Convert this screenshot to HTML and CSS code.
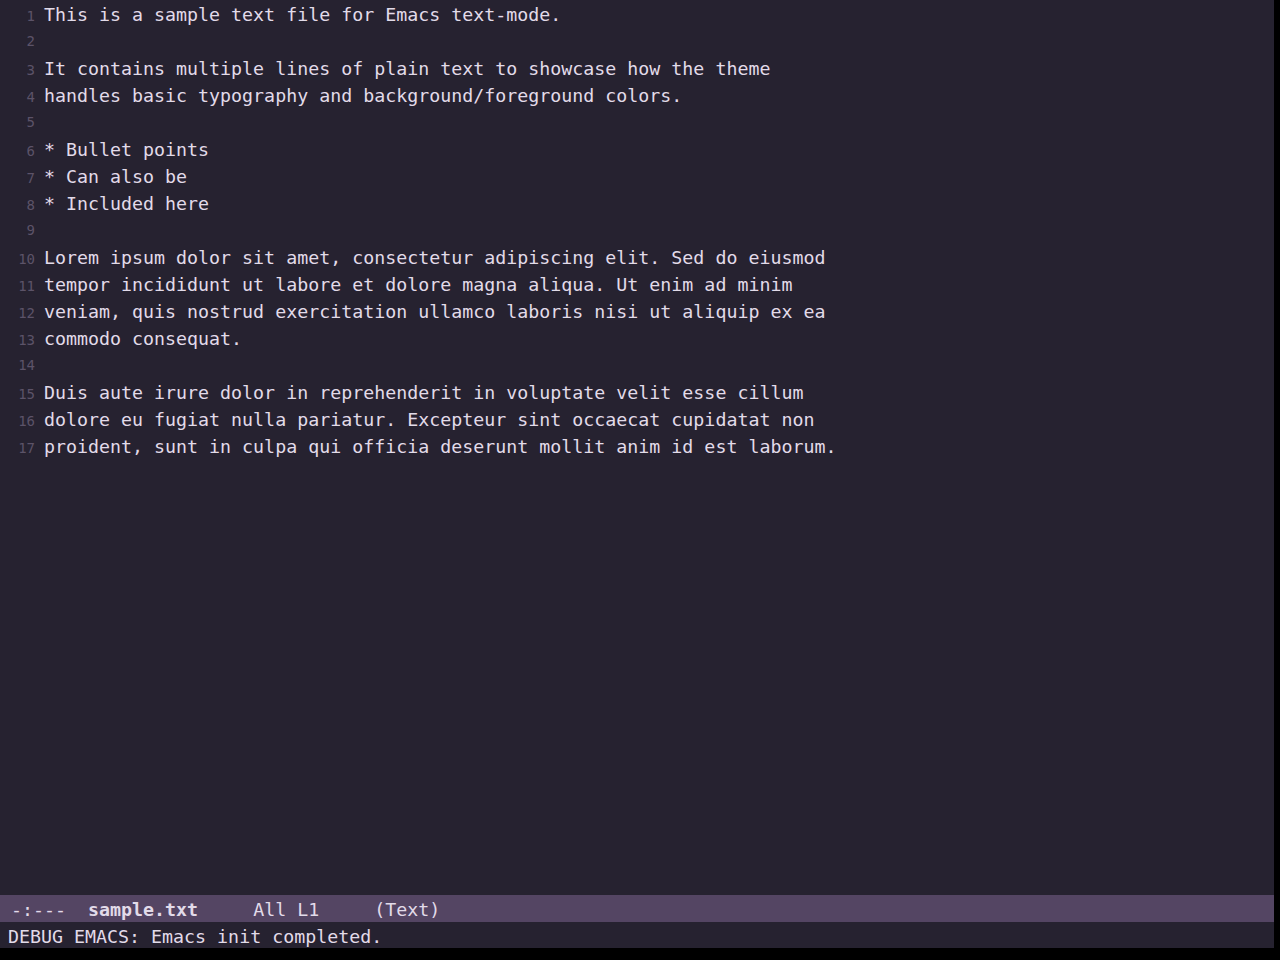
FILE: index.html
```html
<!DOCTYPE html>
<html>
<head>
	<meta charset="utf-8">
	<title>sample.txt - Emacs</title>
	<link rel="stylesheet" href="styles.css">
</head>
<body>
	<div class="frame">
		<div class="buffer">
			<div class="line"><span class="num">1</span><span class="txt">This is a sample text file for Emacs text-mode.</span></div>
			<div class="line"><span class="num">2</span><span class="txt"></span></div>
			<div class="line"><span class="num">3</span><span class="txt">It contains multiple lines of plain text to showcase how the theme</span></div>
			<div class="line"><span class="num">4</span><span class="txt">handles basic typography and background/foreground colors.</span></div>
			<div class="line"><span class="num">5</span><span class="txt"></span></div>
			<div class="line"><span class="num">6</span><span class="txt">* Bullet points</span></div>
			<div class="line"><span class="num">7</span><span class="txt">* Can also be</span></div>
			<div class="line"><span class="num">8</span><span class="txt">* Included here</span></div>
			<div class="line"><span class="num">9</span><span class="txt"></span></div>
			<div class="line"><span class="num">10</span><span class="txt">Lorem ipsum dolor sit amet, consectetur adipiscing elit. Sed do eiusmod</span></div>
			<div class="line"><span class="num">11</span><span class="txt">tempor incididunt ut labore et dolore magna aliqua. Ut enim ad minim</span></div>
			<div class="line"><span class="num">12</span><span class="txt">veniam, quis nostrud exercitation ullamco laboris nisi ut aliquip ex ea</span></div>
			<div class="line"><span class="num">13</span><span class="txt">commodo consequat.</span></div>
			<div class="line"><span class="num">14</span><span class="txt"></span></div>
			<div class="line"><span class="num">15</span><span class="txt">Duis aute irure dolor in reprehenderit in voluptate velit esse cillum</span></div>
			<div class="line"><span class="num">16</span><span class="txt">dolore eu fugiat nulla pariatur. Excepteur sint occaecat cupidatat non</span></div>
			<div class="line"><span class="num">17</span><span class="txt">proident, sunt in culpa qui officia deserunt mollit anim id est laborum.</span></div>
		</div>
		<div class="modeline"> -:---  <b>sample.txt</b>     All L1     (Text)</div>
		<div class="echo">DEBUG EMACS: Emacs init completed.</div>
	</div>
</body>
</html>
```

FILE: styles.css
```css
body {
	margin: 0;
	background-color: #000;
	font-family: "DejaVu Sans Mono", monospace;
	font-size: 18.3px;
	color: #e2dbe9;
}

.frame {
	width: 1274px;
	height: 948px;
	display: flex;
	flex-direction: column;
	background-color: #262230;
}

.buffer {
	height: 894px;
	padding-top: 1px;
}

.line {
	display: flex;
	align-items: baseline;
	height: 27px;
	line-height: 27px;
}

.num {
	width: 35px;
	text-align: right;
	font-size: 14px;
	color: #5c5368;
	flex: none;
}

.txt {
	margin-left: 9px;
	white-space: pre;
}

.modeline {
	height: 26px;
	padding-top: 1px;
	line-height: 27px;
	background-color: #544563;
	white-space: pre;
}

.modeline b {
	font-weight: bold;
}

.echo {
	height: 24px;
	padding-top: 2px;
	line-height: 26px;
	padding-left: 8px;
	white-space: pre;
}
```
